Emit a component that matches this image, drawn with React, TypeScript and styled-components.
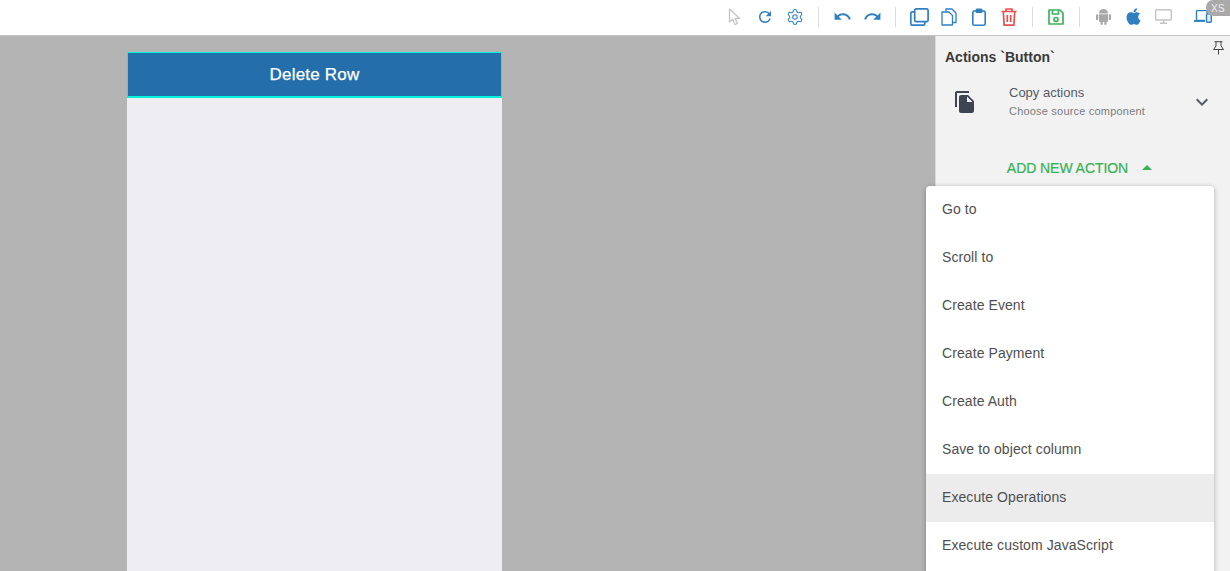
import React from "react";
import styled, { createGlobalStyle } from "styled-components";
import { MdUndo, MdRedo, MdRefresh, MdFileCopy, MdKeyboardArrowDown, MdArrowDropUp } from "react-icons/md";
import { FaApple } from "react-icons/fa";
import { Settings } from "lucide-react";

const Global = createGlobalStyle`
  html, body { margin: 0; padding: 0; height: 100%; overflow: hidden; }
  body { font-family: "Liberation Sans", Arial, sans-serif; }
  #root { height: 100%; }
`;
const Page = styled.div`
  width: 1230px; height: 571px; position: relative; overflow: hidden;
  display: flex; flex-direction: column; background: #fff;
`;
const Toolbar = styled.header`
  height: 33px; flex: none; background: #fff; border-bottom: 1px solid #c4c4c4;
  display: flex; align-items: center; justify-content: flex-end; padding: 0 12px 2px 0;
  box-sizing: content-box;
`;
const Tool = styled.span<{ $color: string; $lead?: number }>`
  width: 30px; height: 24px; display: flex; align-items: center; justify-content: center;
  color: ${p => p.$color}; flex: none; margin-left: ${p => p.$lead ?? 0}px;
`;
const Sep = styled.span`
  width: 1px; height: 20px; background: #dcdcdc; margin: 0 8px; flex: none;
`;
const Badge = styled.span`
  position: absolute; top: 0; right: 0; width: 24px; height: 16px; background: #a9a9a9; color: #eee;
  font-size: 10px; letter-spacing: .3px; display: flex; align-items: center; justify-content: center;
  border-radius: 7px 0 0 8px;
`;
const Main = styled.div`
  flex: 1; display: flex; min-height: 0;
`;
const Canvas = styled.main`
  width: 935px; flex: none; background: #b4b4b4; padding: 16px 0 0 127px; box-sizing: border-box;
`;
const Phone = styled.div`
  width: 375px; height: 100%; background: #ededf2;
`;
const RowButton = styled.div`
  height: 46px; box-sizing: border-box; background: #236eab; border: 1px solid #00f5dc; border-bottom-width: 2px;
  color: #fff; font-size: 17px; letter-spacing: .2px; -webkit-text-stroke: .25px #fff;
  display: flex; align-items: center; justify-content: center;
`;
const Panel = styled.aside`
  flex: 1; background: #f2f2f2; border-left: 1px solid #d9d9d9; position: relative; padding: 0 0 0 9px;
  color: #3c3c3c;
`;
const Pin = styled.span`
  position: absolute; top: 5px; right: 5px; display: flex;
`;
const Title = styled.h2`
  margin: 13px 0 0; font-size: 14px; line-height: 17px; font-weight: 700; color: #3a3a3a;
`;
const CopyRow = styled.div`
  display: grid; grid-template-columns: 64px 1fr 28px; align-items: center; margin-top: 17px; height: 38px;
`;
const CopyIcon = styled.span`
  display: flex; padding-left: 8px; color: #3d4452;
`;
const CopyText = styled.div`
  display: flex; flex-direction: column; gap: 5px; margin-top: -2px;
`;
const CopyTitle = styled.span`
  font-size: 13px; line-height: 15px; color: #555a63;
`;
const CopySub = styled.span`
  font-size: 11px; line-height: 13px; letter-spacing: .2px; color: #7d7d7d;
`;
const Chevron = styled.span`
  display: flex; color: #555a63; margin-left: -12px;
`;
const AddAction = styled.div`
  display: flex; align-items: center; justify-content: center; margin: 37px 0 0; padding-right: 9px; height: 20px;
  color: #37b155; font-size: 14px; letter-spacing: -.06px; gap: 7px; -webkit-text-stroke: .2px #37b155;
`;
const Menu = styled.ul`
  position: absolute; left: 926px; top: 186px; width: 288px; margin: 0; padding: 0; list-style: none;
  background: #fff; border-radius: 4px 4px 0 0; box-shadow: 0 1px 5px rgba(0,0,0,.3); height: 400px;
`;
const MenuItem = styled.li<{ $active?: boolean }>`
  height: 48px; box-sizing: border-box; padding: 0 0 2px 16px; display: flex; align-items: center; font-size: 14px;
  letter-spacing: .08px; color: #4f4f4f;
  background: ${p => (p.$active ? "#ececec" : "transparent")};
`;

const Cursor = () => (
  <svg width="16" height="18" viewBox="0 0 16 18" fill="none" stroke="#c4c4c4" strokeWidth="1.3" strokeLinejoin="round">
    <path d="M2.5 1v13l3.2-2.8 2.3 5.3 2.4-1-2.3-5.2h4.4z" />
  </svg>
);
const Duplicate = () => (
  <svg width="19" height="18" viewBox="0 0 19 18" fill="none" stroke="#2f7fc1" strokeWidth="1.7">
    <rect x="4.7" y=".9" width="13.4" height="12.800" rx="1.500" />
    <path d="M4.700 3.800H2.300a1.500 1.500 0 0 0-1.500 1.500v10.400a1.500 1.500 0 0 0 1.500 1.500h11a1.500 1.500 0 0 0 1.500-1.500v-1.900" />
  </svg>
);
const Copy = () => (
  <svg width="16" height="18" viewBox="0 0 16 18" fill="none" stroke="#2f7fc1" strokeWidth="1.3" strokeLinejoin="round">
    <path d="M5 3.500V1h6l4 4v9.500h-3.500" />
    <path d="M1 4h7l3.500 3.500V17H1z" />
  </svg>
);
const Paste = () => (
  <svg width="14" height="18" viewBox="0 0 14 18" fill="none" stroke="#2f7fc1" strokeWidth="1.6">
    <rect x=".8" y="3" width="12.400" height="14.200" rx="1.500" />
    <rect x="3.500" y=".5" width="7" height="4.500" rx="1.500" fill="#2f7fc1" stroke="none" />
  </svg>
);
const Trash = () => (
  <svg width="16" height="18" viewBox="0 0 16 18" fill="none" stroke="#e3514f" strokeWidth="1.700" strokeLinejoin="round">
    <path d="M.5 3.500h15M5 3.500V1h6v2.500M2.300 3.500l.8 13.700h9.800l.8-13.700M6.300 7v7M9.700 7v7" />
  </svg>
);
const Save = () => (
  <svg width="16" height="16" viewBox="0 0 16 16" fill="none" stroke="#3fb35c" strokeWidth="1.700" strokeLinejoin="round">
    <path d="M1 1h11l3 3v11H1z" />
    <path d="M4.500 1v4h6V1" />
    <circle cx="8" cy="10.500" r="2" />
  </svg>
);
const AndroidRobot = () => (
  <svg width="15" height="17" viewBox="0 0 15 17" fill="#a8a8a8">
    <path d="M3 5.500a4.500 4.500 0 0 1 9 0z" />
    <path d="M3 6.300h9v6.700a1 1 0 0 1-1 1H4a1 1 0 0 1-1-1z" />
    <rect x="0" y="6.300" width="2.200" height="6" rx="1.100" />
    <rect x="12.800" y="6.300" width="2.200" height="6" rx="1.100" />
    <rect x="4.500" y="12" width="2.200" height="5" rx="1.100" />
    <rect x="8.300" y="12" width="2.200" height="5" rx="1.100" />
  </svg>
);
const Monitor = () => (
  <svg width="17" height="15" viewBox="0 0 17 15" fill="none" stroke="#c4c4c4" strokeWidth="1.400">
    <rect x=".7" y=".7" width="15.600" height="10.300" rx="1" />
    <path d="M8.500 11v3M5 14.200h7" />
  </svg>
);
const Responsive = () => (
  <svg width="18" height="13" viewBox="0 0 18 13" fill="none" stroke="#2f7fc1" strokeWidth="1.400">
    <path d="M11 10.500H2.500V1.500a1 1 0 0 1 1-1H13V3" />
    <path d="M0 11h11" strokeWidth="1.800" />
    <rect x="12.500" y="3.700" width="4.800" height="8.500" rx="1" fill="#2f7fc1" fillOpacity=".15" />
  </svg>
);
const Thumbtack = () => (
  <svg width="13" height="14" viewBox="0 0 13 14" fill="none" stroke="#444" strokeWidth="1" strokeLinejoin="round">
    <path d="M2.500.7h8M4 .7v4.300L1.500 8.500h10L9 5V.7M6.500 8.500V13.500" />
  </svg>
);

const items = ["Go to", "Scroll to", "Create Event", "Create Payment", "Create Auth", "Save to object column", "Execute Operations", "Execute custom JavaScript"];

export default function App() {
  return (
    <Page>
      <Global />
      <Toolbar>
        <Tool $color="#c4c4c4"><Cursor /></Tool>
        <Tool $color="#2f7fc1"><MdRefresh size={18} /></Tool>
        <Tool $color="#2f7fc1"><Settings size={18} strokeWidth={1.4} /></Tool>
        <Sep />
        <Tool $color="#2f7fc1"><MdUndo size={19} /></Tool>
        <Tool $color="#2f7fc1"><MdRedo size={19} /></Tool>
        <Sep />
        <Tool $color="#2f7fc1"><Duplicate /></Tool>
        <Tool $color="#2f7fc1"><Copy /></Tool>
        <Tool $color="#2f7fc1"><Paste /></Tool>
        <Tool $color="#e3514f"><Trash /></Tool>
        <Sep />
        <Tool $color="#3fb35c"><Save /></Tool>
        <Sep />
        <Tool $color="#a8a8a8"><AndroidRobot /></Tool>
        <Tool $color="#2f7fc1"><FaApple size={19} /></Tool>
        <Tool $color="#c4c4c4"><Monitor /></Tool>
        <Tool $color="#2f7fc1" $lead={10}><Responsive /></Tool>
      </Toolbar>
      <Badge>XS</Badge>
      <Main>
        <Canvas>
          <Phone>
            <RowButton>Delete Row</RowButton>
          </Phone>
        </Canvas>
        <Panel>
          <Pin><Thumbtack /></Pin>
          <Title>Actions `Button`</Title>
          <CopyRow>
            <CopyIcon><MdFileCopy size={24} /></CopyIcon>
            <CopyText>
              <CopyTitle>Copy actions</CopyTitle>
              <CopySub>Choose source component</CopySub>
            </CopyText>
            <Chevron><MdKeyboardArrowDown size={24} /></Chevron>
          </CopyRow>
          <AddAction>ADD NEW ACTION <MdArrowDropUp size={24} /></AddAction>
        </Panel>
      </Main>
      <Menu>
        {items.map(i => <MenuItem key={i} $active={i === "Execute Operations"}>{i}</MenuItem>)}
      </Menu>
    </Page>
  );
}
